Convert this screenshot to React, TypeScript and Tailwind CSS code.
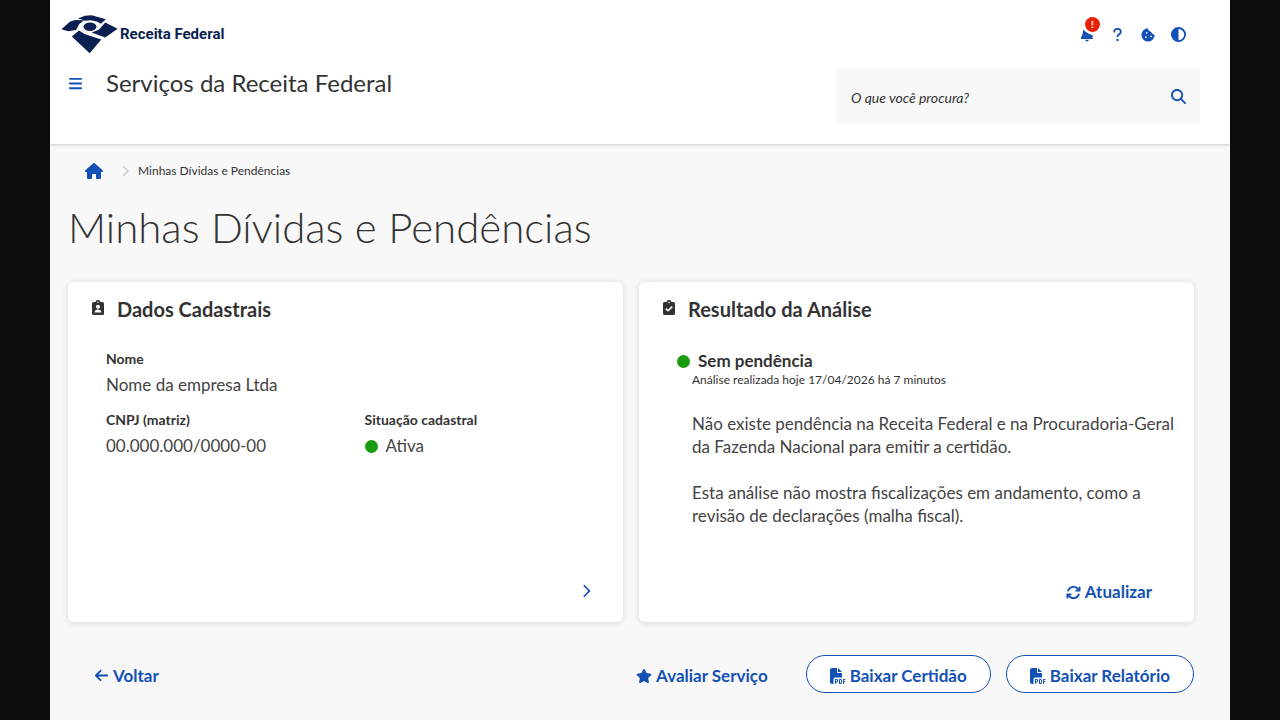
import type { ReactNode } from "react";
import {
  FaArrowLeft,
  FaArrowsRotate,
  FaBars,
  FaChevronRight,
  FaCircleHalfStroke,
  FaCookieBite,
  FaFilePdf,
  FaHouse,
  FaMagnifyingGlass,
  FaQuestion,
  FaStar,
} from "react-icons/fa6";

function Logo() {
  return (
    <svg viewBox="30 30 175 120" className="h-[39px] w-[57px]" fill="#0b1f52" aria-hidden="true">
      <path d="M31 74 L58 50 L74 45 L101 46 L86 58 L76 76 L52 80 Z" />
      <path d="M82 40 L104 32 L124 31 L168 43 L152 57 L140 50 L122 46 L104 48 Z" />
      <ellipse cx="119" cy="66" rx="20" ry="13" />
      <path d="M166 53 L204 72 L166 99 L124 84 L146 75 Z" />
      <path d="M63 96 L85 78 L104 89 L154 105 L118 148 Z" />
    </svg>
  );
}

function Bell() {
  return (
    <svg viewBox="0 0 14 14" className="size-[14px]" fill="currentColor" aria-hidden="true">
      <path d="M3.200 1.500 C5 3.800 7.500 5.500 12.600 7.200 L12.800 11 H1 V9.400 C2.600 7.500 2.900 5 3.200 1.500 Z" />
      <path d="M5.200 11.800 H8.800 A1.800 1.600 0 0 1 5.200 11.800 Z" />
    </svg>
  );
}

function ClipboardUser() {
  return (
    <svg viewBox="0 0 12 15" className="mb-1 h-[15px] w-3" aria-hidden="true">
      <path fill="#333" d="M1.500 2H3.500a2.500 2 0 0 1 5 0h2a1.500 1.500 0 0 1 1.500 1.500v10a1.500 1.500 0 0 1-1.500 1.500h-9A1.500 1.500 0 0 1 0 13.500v-10A1.500 1.500 0 0 1 1.500 2Z" />
      <circle cx="6" cy="2.300" r="0.700" fill="#fff" />
      <circle cx="6" cy="6.800" r="2" fill="#fff" />
      <path fill="#fff" d="M2.600 12.500c0-2.100 1.300-3 3.400-3s3.400.9 3.400 3Z" />
    </svg>
  );
}

function ClipboardCheck() {
  return (
    <svg viewBox="0 0 12 15" className="mb-1 h-[15px] w-3" aria-hidden="true">
      <path fill="#333" d="M1.500 2H3.500a2.500 2 0 0 1 5 0h2a1.500 1.500 0 0 1 1.500 1.500v10a1.500 1.500 0 0 1-1.500 1.500h-9A1.500 1.500 0 0 1 0 13.500v-10A1.500 1.500 0 0 1 1.500 2Z" />
      <circle cx="6" cy="2.500" r="0.800" fill="#fff" />
      <path fill="none" stroke="#fff" strokeWidth="1.500" d="m2.800 8.600 2.200 2.200 4.200-4.200" />
    </svg>
  );
}

function Dot() {
  return <span className="size-[13px] shrink-0 rounded-full bg-[#169c0c]" />;
}

function Card({ icon, title, children }: { icon: ReactNode; title: string; children: ReactNode }) {
  return (
    <section className="flex min-h-[340px] flex-1 flex-col rounded-md bg-white pt-[15px] pb-5 pl-6 shadow-[0_1px_6px_rgba(0,0,0,0.14)]">
      <h2 className="flex items-center gap-[13px] text-xl leading-6 font-bold">
        {icon}
        {title}
      </h2>
      {children}
    </section>
  );
}

function Field({ label, children }: { label: string; children: ReactNode }) {
  return (
    <div>
      <dt className="text-sm leading-5 font-bold">{label}</dt>
      <dd className="flex items-center gap-2 pt-1 text-[17px] leading-6 text-[#444]">{children}</dd>
    </div>
  );
}

const outlined =
  "flex h-[38px] items-center gap-1 rounded-full border border-[#1351b4] bg-white px-[23px] pt-[3px] text-[17px] font-bold";

export default function App() {
  return (
    <div className="min-h-screen bg-[#0d0d0d] px-[50px] font-['Lato',sans-serif] text-[#333]">
      <div className="flex min-h-screen flex-col bg-[#f8f8f8]">
        <header className="flex h-36 flex-col bg-white pr-[30px] pl-[11px] shadow-[0_1px_3px_rgba(0,0,0,0.18)]">
          <div className="flex h-[67px] items-center justify-between pt-0.5 pr-[14px]">
            <a href="#inicio" className="flex items-center text-[#0b1f52]">
              <Logo />
              <span className="pl-0.5 font-['Roboto',sans-serif] text-[15px] font-bold">Receita Federal</span>
            </a>
            <nav aria-label="Acesso rápido" className="flex items-center gap-4 text-[#1351b4]">
              <button aria-label="Notificações" className="relative">
                <Bell />
                <span className="absolute -top-[11px] left-[5px] flex size-[15px] items-center justify-center rounded-full bg-[#e52207] text-[10px] font-bold text-white">
                  !
                </span>
              </button>
              <button aria-label="Ajuda"><FaQuestion className="size-[15px]" /></button>
              <button aria-label="Cookies"><FaCookieBite className="size-[14px]" /></button>
              <button aria-label="Alto contraste"><FaCircleHalfStroke className="size-[15px]" /></button>
            </nav>
          </div>
          <div className="flex items-start justify-between">
            <div className="flex items-center gap-[23px] pl-[7px]">
              <button aria-label="Menu" className="text-[#1351b4]"><FaBars className="size-[15px]" /></button>
              <span className="text-2xl leading-8">Serviços da Receita Federal</span>
            </div>
            <form role="search" className="mt-px flex h-14 w-[364px] items-center bg-[#f8f8f8] pr-3.5 pl-[15px]">
              <input
                aria-label="O que você procura?"
                placeholder="O que você procura?"
                className="min-w-0 flex-1 bg-transparent pt-1 text-sm italic outline-none placeholder:text-[#333]"
              />
              <button type="button" aria-label="Buscar" className="text-[#1351b4]">
                <FaMagnifyingGlass className="size-[15px]" />
              </button>
            </form>
          </div>
        </header>

        <main className="flex flex-1 flex-col pr-9 pl-[18px]">
          <nav aria-label="Trilha" className="flex h-[54px] items-center pl-[17px] text-xs">
            <a href="#inicio" aria-label="Início" className="text-[#1351b4]"><FaHouse className="size-[18px]" /></a>
            <FaChevronRight className="mr-[7px] ml-4 size-3 text-[#ccc]" />
            <span>Minhas Dívidas e Pendências</span>
          </nav>
          <h1 className="pt-1 text-[42px] leading-[50px] font-light">Minhas Dívidas e Pendências</h1>

          <div className="flex gap-4 pt-[30px]">
            <Card icon={<ClipboardUser />} title="Dados Cadastrais">
              <dl className="grid grid-cols-2 gap-y-[13px] pt-7 pl-[14px]">
                <div className="col-span-2"><Field label="Nome">Nome da empresa Ltda</Field></div>
                <Field label="CNPJ (matriz)">00.000.000/0000-00</Field>
                <Field label="Situação cadastral"><Dot />Ativa</Field>
              </dl>
              <button aria-label="Ver dados cadastrais" className="mt-auto mr-[26px] self-end p-1 text-[#1351b4]">
                <FaChevronRight className="size-[14px]" />
              </button>
            </Card>
            <Card icon={<ClipboardCheck />} title="Resultado da Análise">
              <div className="pt-7 pl-[14px]">
                <h3 className="flex items-center gap-2 text-[17px] leading-6 font-bold"><Dot />Sem pendência</h3>
                <p className="pl-[15px] text-xs leading-[14px]">Análise realizada hoje 17/04/2026 há 7 minutos</p>
              </div>
              <div className="flex flex-col gap-[23px] pt-[25px] pr-3 pl-[29px] text-[17px] leading-[23px] text-[#444]">
                <p>Não existe pendência na Receita Federal e na Procuradoria-Geral<br />da Fazenda Nacional para emitir a certidão.</p>
                <p>Esta análise não mostra fiscalizações em andamento, como a<br />revisão de declarações (malha fiscal).</p>
              </div>
              <button className="mt-auto mr-[42px] flex h-5 items-center gap-1 self-end text-[17px] font-bold text-[#1351b4]">
                <FaArrowsRotate className="size-[15px]" />
                Atualizar
              </button>
            </Card>
          </div>

          <div className="flex items-center pt-[33px] pb-6 text-[#1351b4]">
            <button className="ml-[26px] flex items-center gap-1 pt-[3px] text-[17px] font-bold">
              <FaArrowLeft className="size-[15px]" />
              Voltar
            </button>
            <button className="mr-[38px] ml-auto flex items-center gap-1 pt-[3px] text-[17px] font-bold">
              <FaStar className="size-4" />
              Avaliar Serviço
            </button>
            <div className="flex gap-[15px]">
              <button className={outlined}><FaFilePdf className="size-4" />Baixar Certidão</button>
              <button className={outlined}><FaFilePdf className="size-4" />Baixar Relatório</button>
            </div>
          </div>
        </main>
      </div>
    </div>
  );
}
